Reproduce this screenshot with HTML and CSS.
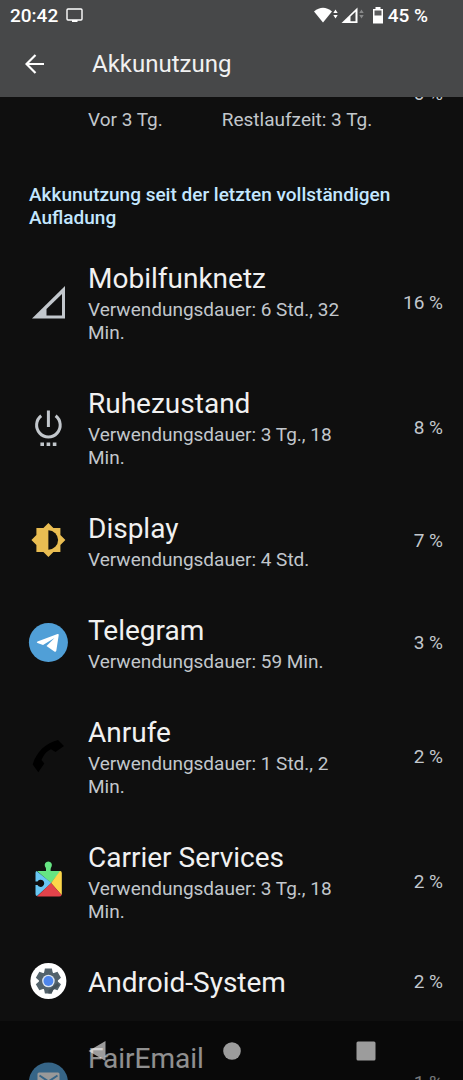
FILE: index.html
```html
<!DOCTYPE html>
<html lang="de">
<head>
<meta charset="utf-8">
<meta name="viewport" content="width=device-width, initial-scale=1">
<title>Akkunutzung</title>
<link rel="stylesheet" href="styles.css">
</head>
<body>
<header class="top">
  <div class="status">
    <span class="clock">20:42</span>
    <svg class="cast" width="18" height="16" viewBox="0 0 18 16"><rect x="1" y="1" width="15" height="11" rx="1" fill="none" stroke="#fff" stroke-width="1.4"/><path d="M6 12h5.500v2H6z" fill="#fff"/></svg>
    <svg class="signals" width="72" height="20" viewBox="0 0 72 20">
      <path d="M0 5.500Q9 -2 18 5.500L9 16.500z" fill="#fff"/>
      <path d="M19.300 7l2.200-3.500L23.700 7zM19.300 9l2.200 3.500L23.700 9z" fill="#fff"/>
      <path d="M27.500 17L43.500 1.500V17z" fill="#fff"/><path d="M36.500 10.500l5-4.700v9.500h-5z" fill="#474849"/>
      <path d="M45.300 7l2.200-3.500L49.700 7zM45.300 9l2.200 3.500L49.700 9z" fill="#88898a"/>
      <path d="M61.500 1h5v2h2.500v14.500h-10V3h2.500z" fill="#fff"/><path d="M60.500 4.500h7v5h-7z" fill="#5c5d5e"/>
    </svg>
    <span class="level">45 %</span>
  </div>
  <div class="bar">
    <button class="back" aria-label="Zurück"><svg width="20" height="20" viewBox="0 0 20 20" fill="none" stroke="#fff" stroke-width="2.200"><path d="M19 10H1.500M10.500 1l-9 9 9 9"/></svg></button>
    <h1 class="title">Akkunutzung</h1>
  </div>
</header>
<main class="content">
  <section class="chart">
    <span class="axis">0 %</span>
    <div class="times"><span>Vor 3 Tg.</span><span>Restlaufzeit: 3 Tg.</span></div>
  </section>
  <h2 class="heading">Akkunutzung seit der letzten vollständigen Aufladung</h2>
  <ul class="list">
    <li class="row">
      <svg class="icon" viewBox="0 0 40 40"><path d="M4 36.500L37 4v32.500z" fill="#c2c7cc"/><path d="M18.500 27L34 12v21.500H18.500z" fill="#0f0f0f"/></svg>
      <div class="text"><h3 class="name">Mobilfunknetz</h3><p class="usage">Verwendungsdauer: 6 Std., 32 Min.</p></div>
      <span class="percent">16 %</span>
    </li>
    <li class="row">
      <svg class="icon" viewBox="0 0 40 40"><g fill="none" stroke="#c2c7cc" stroke-width="3"><path d="M20.400 3.500v16.500M13.200 8.800A11.800 11.800 0 1 0 27.600 8.800"/></g><path d="M12.400 35.500h3.600v3.600h-3.600zM18.600 35.500h3.600v3.600h-3.600zM24.800 35.500h3.600v3.600h-3.600z" fill="#c2c7cc"/></svg>
      <div class="text"><h3 class="name">Ruhezustand</h3><p class="usage">Verwendungsdauer: 3 Tg., 18 Min.</p></div>
      <span class="percent">8 %</span>
    </li>
    <li class="row">
      <svg class="icon" viewBox="0 0 40 40"><path d="M20.400 2l5 5h7v7l5 5-5 5v7h-7l-5 5-5-5h-7v-7l-5-5 5-5V7h7z" fill="#e9bd52"/><path d="M20.400 9.300a9.700 9.700 0 0 1 0 19.400z" fill="#0f0f0f"/></svg>
      <div class="text"><h3 class="name">Display</h3><p class="usage">Verwendungsdauer: 4 Std.</p></div>
      <span class="percent">7 %</span>
    </li>
    <li class="row">
      <svg class="icon" viewBox="0 0 40 40"><circle cx="20.400" cy="19.500" r="19.500" fill="#509fd7"/><path d="M9.500 18.500L29.500 11q1.500-.4 1.200 1.200L28.300 27.700q-.5 1.700-2 .7L18.500 23l8-8-11.500 7-5.500-1.900q-1.500-.8 0-1.600z" fill="#fff"/></svg>
      <div class="text"><h3 class="name">Telegram</h3><p class="usage">Verwendungsdauer: 59 Min.</p></div>
      <span class="percent">3 %</span>
    </li>
    <li class="row">
      <svg class="icon" viewBox="0 0 40 40"><path d="M4.700 28.500C8 17 17 7 30 4l6 6-8.500 6-4.500-2.700C19 15 15.500 19 13.500 24l2.800 3.500-6 8.800z" fill="#000"/></svg>
      <div class="text"><h3 class="name">Anrufe</h3><p class="usage">Verwendungsdauer: 1 Std., 2 Min.</p></div>
      <span class="percent">2 %</span>
    </li>
    <li class="row">
      <svg class="icon" viewBox="0 0 40 40"><path d="M9 10h24L23 22z" fill="#66e583"/><path d="M17 5.500a3.600 3.600 0 1 1 6.600 0q-1 1.500-1 3v2h-4.600V8q0-1.500-1-2.500z" fill="#66e583"/><path d="M8.500 10L23.500 22 9 35q-1.500 0-1.500-2V12q0-1.500 1-2z" fill="#68c7f3"/><path d="M32 10L23 22l10.500 12q.3-.5.300-1.500V12q0-2-1.800-2z" fill="#fcd64a"/><path d="M23 22L9 35.500h22q2 0 2.700-1.500z" fill="#e2434b"/><path d="M7 20.500h2.500a3.600 3.600 0 1 1 0 3.600H7z" fill="#0f0f0f"/></svg>
      <div class="text"><h3 class="name">Carrier Services</h3><p class="usage">Verwendungsdauer: 3 Tg., 18 Min.</p></div>
      <span class="percent">2 %</span>
    </li>
    <li class="row row-short">
      <svg class="icon" viewBox="0 0 40 40"><circle cx="20.400" cy="20" r="18" fill="#fff"/><g transform="translate(20.400 20)"><path d="M-3.500-12.500h7L5-5h-10zM-3.500 12.500h7L5 5h-10z" fill="#53636c"/><path d="M-3.500-12.500h7L5-5h-10zM-3.500 12.500h7L5 5h-10z" transform="rotate(60)" fill="#53636c"/><path d="M-3.500-12.500h7L5-5h-10zM-3.500 12.500h7L5 5h-10z" transform="rotate(120)" fill="#53636c"/><circle r="9.500" fill="#53636c"/><path d="M0 9.500L9 2l2 2.500L5 9l-2 3.500h-3z" fill="#44525a"/><circle r="6.300" fill="#dce6f2"/><circle r="4.900" fill="#4e86ec"/></g></svg>
      <div class="text"><h3 class="name">Android-System</h3></div>
      <span class="percent">2 %</span>
    </li>
    <li class="row">
      <svg class="icon" viewBox="0 0 40 40"><circle cx="20.400" cy="20" r="19.500" fill="#5ba9e2"/><rect x="9.500" y="10.500" width="22" height="18" rx="1.500" fill="#fff"/><path d="M11.500 13.500l9 6 9-6" fill="none" stroke="#5ba9e2" stroke-width="2"/></svg>
      <div class="text"><h3 class="name">FairEmail</h3><p class="usage">Verwendungsdauer: 3 Tg., 18 Min.</p></div>
      <span class="percent">1 %</span>
    </li>
  </ul>
</main>
<nav class="nav">
  <button class="key" aria-label="Zurück"><svg width="20" height="20" viewBox="0 0 20 20"><path d="M.500 10L17.500 0v20z" fill="#fff"/></svg></button>
  <button class="key" aria-label="Startbildschirm"><svg width="20" height="20" viewBox="0 0 20 20"><circle cx="10" cy="10" r="8.800" fill="#fff"/></svg></button>
  <button class="key" aria-label="Letzte Apps"><svg width="20" height="20" viewBox="0 0 20 20"><rect x=".5" y=".5" width="19" height="19" rx="1.500" fill="#fff"/></svg></button>
</nav>
</body>
</html>
```
FILE: styles.css
```css
* { box-sizing: border-box; }
body {
  margin: 0;
  height: 100vh;
  overflow: hidden;
  background: #0f0f0f;
  color: #c2c7cc;
  font-family: Roboto, sans-serif;
  font-size: 19px;
  line-height: 23px;
}
h1, h2, h3, p, ul { margin: 0; padding: 0; }
button { border: 0; padding: 0; background: none; display: flex; }
.top {
  position: fixed;
  z-index: 1;
  top: 0;
  left: 0;
  right: 0;
  height: 97px;
  background: #474849;
  color: #fff;
}
.status {
  display: flex;
  align-items: center;
  height: 31px;
  padding: 0 35px 0 10px;
  font-weight: 500;
}
.cast { margin-left: 8px; }
.signals { margin-left: auto; }
.level { margin-left: 2px; }
.bar {
  display: flex;
  align-items: center;
  gap: 47px;
  height: 66px;
  padding-left: 25px;
}
.title { font-size: 24px; line-height: 32px; font-weight: 400; color: #f1f1f1; }
.content { padding-top: 82px; }
.chart { padding: 0 20px 0 88px; }
.axis { display: block; text-align: right; }
.times { display: flex; gap: 59px; padding-top: 3px; }
.heading {
  padding: 52px 40px 11px 29px;
  color: #c3e7ff;
  font-size: 19px;
  line-height: 23px;
  font-weight: 500;
}
.list { list-style: none; }
.row {
  display: flex;
  align-items: center;
  padding: 22px 20px 21px 28px;
}
.row-short { padding-top: 17px; padding-bottom: 17px; }
.icon { flex: none; width: 40px; height: 40px; margin-bottom: 2px; overflow: visible; }
.text { flex: 1; padding: 0 60px 0 20px; }
.name { font-size: 28px; line-height: 33px; font-weight: 400; color: #f1f1f1; }
.usage { padding-top: 3px; }
.percent { flex: none; margin-bottom: 2px; }
.nav {
  position: fixed;
  z-index: 1;
  left: 0;
  right: 0;
  bottom: 0;
  display: flex;
  align-items: center;
  justify-content: center;
  gap: 114px;
  height: 59px;
  background: rgba(0, 0, 0, 0.4);
}
.key { opacity: 0.6; }
```
